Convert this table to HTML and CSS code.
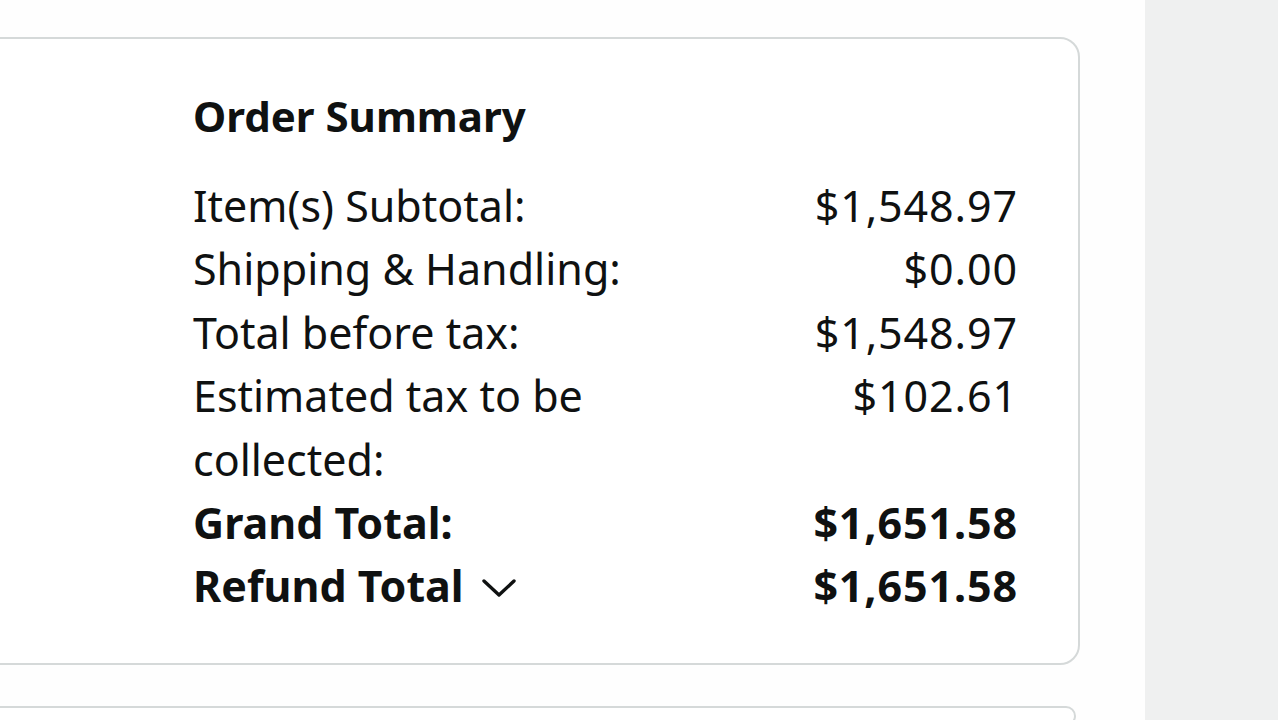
FILE: index.html
```html
<!DOCTYPE html>
<html lang="en">
<head>
<meta charset="utf-8">
<title>Order Summary</title>
<link rel="stylesheet" href="styles.css">
</head>
<body>
<div class="page">
  <main class="main">
    <section class="card summary">
      <div class="summary-inner">
        <h2 class="title">Order Summary</h2>
        <div class="row"><span class="label">Item(s) Subtotal:</span><span class="value">$1,548.97</span></div>
        <div class="row"><span class="label">Shipping &amp; Handling:</span><span class="value">$0.00</span></div>
        <div class="row"><span class="label">Total before tax:</span><span class="value">$1,548.97</span></div>
        <div class="row"><span class="label">Estimated tax to be collected:</span><span class="value">$102.61</span></div>
        <div class="row bold"><span class="label">Grand Total:</span><span class="value">$1,651.58</span></div>
        <div class="row bold"><span class="label">Refund Total <svg class="chev" viewBox="0 0 36 22" width="36" height="22"><path d="M3 4 L18 18 L33 4" fill="none" stroke="#0f1111" stroke-width="3.4" stroke-linecap="round" stroke-linejoin="round"/></svg></span><span class="value">$1,651.58</span></div>
      </div>
    </section>
    <section class="card next"></section>
  </main>
  <aside class="side"></aside>
</div>
</body>
</html>
```
FILE: styles.css
```css
html, body {
  margin: 0;
  padding: 0;
  background: #ffffff;
}
body {
  font-family: "Noto Sans", "Open Sans", sans-serif;
  color: #0f1111;
  overflow: hidden;
}
.page {
  display: flex;
  width: 1278px;
  height: 720px;
}
.main {
  width: 1145px;
  flex: none;
  padding-top: 37px;
  background: #fefefe;
}
.side {
  flex: 1;
  background: #eff0f0;
}
.card {
  margin-left: -40px;
  width: 1120px;
  box-sizing: border-box;
  border: 2px solid #d5d9d9;
  border-radius: 20px;
  background: #ffffff;
}
.summary {
  height: 628px;
}
.summary-inner {
  margin-left: 231px;
  margin-right: 60px;
  padding-top: 47px;
}
.title {
  margin: 0 0 28px 0;
  font-size: 42px;
  font-weight: 700;
  line-height: 60px;
}
.row {
  display: flex;
  justify-content: space-between;
  font-size: 43px;
  line-height: 63.4px;
}
.label {
  width: 480px;
}
.value {
  text-align: right;
  letter-spacing: 0.9px;
}
.bold {
  font-weight: 700;
}
.chev {
  vertical-align: middle;
  margin-left: 6px;
  position: relative;
  top: -3px;
}
.next {
  margin-top: 41px;
  height: 20px;
  width: 1116px;
}
```
